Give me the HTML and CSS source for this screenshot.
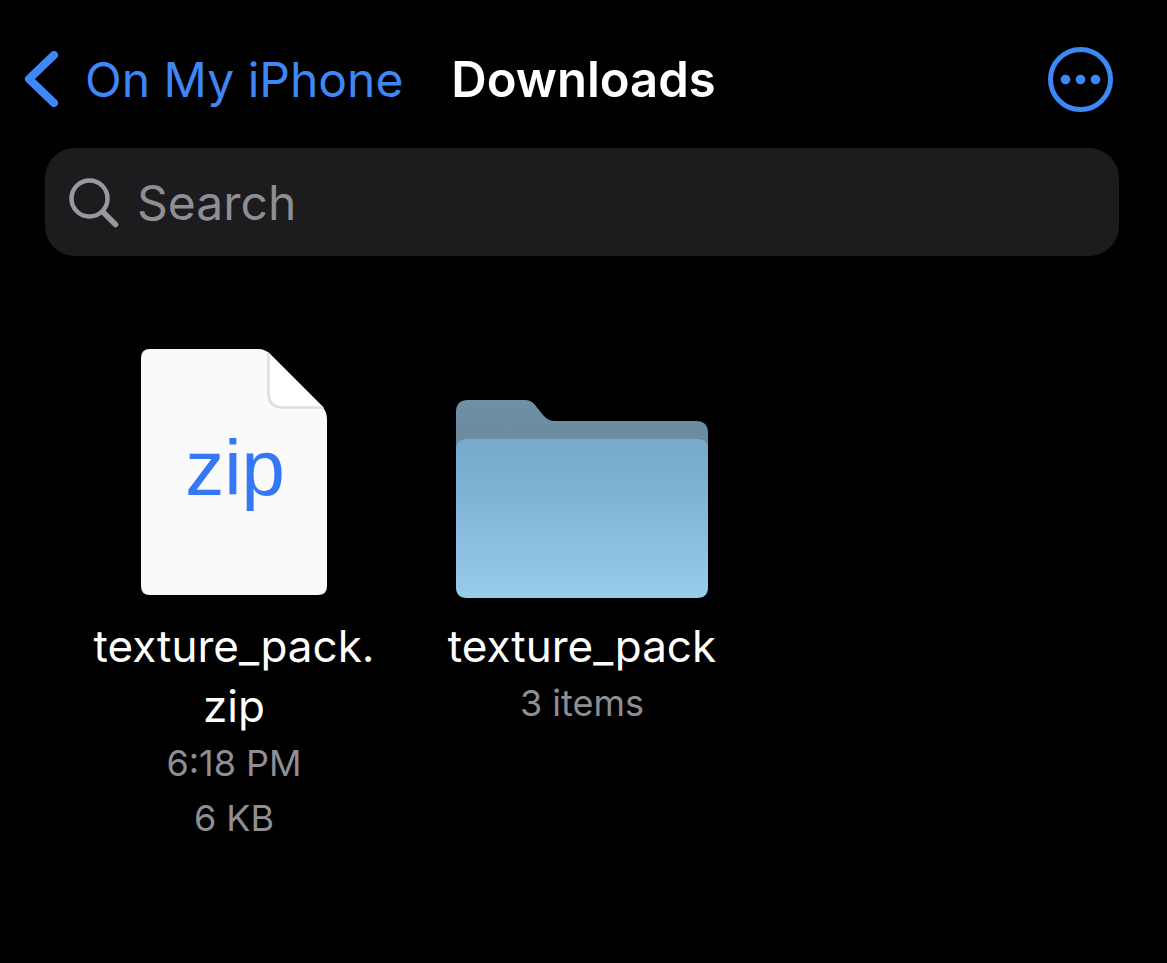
FILE: index.html
```html
<!DOCTYPE html>
<html lang="en">
<head>
  <meta charset="UTF-8" />
  <meta name="viewport" content="width=device-width, initial-scale=1.0" />
  <title>Downloads</title>
  <link rel="stylesheet" href="styles.css">
</head>
<body>

<header class="navbar">
  <a class="back" href="#">
    <svg class="back-icon" viewBox="0 0 36 58" aria-hidden="true">
      <path d="M30 4 L5 28 L30 52" />
    </svg>
    On My iPhone
  </a>
  <h1 class="title">Downloads</h1>
  <button class="more" type="button" aria-label="More options">
    <svg class="more-icon" viewBox="0 0 66 66" aria-hidden="true">
      <circle class="ring" cx="33.500" cy="32.500" r="30" />
      <circle cx="18.500" cy="32.500" r="4.8" />
      <circle cx="33.500" cy="32.500" r="4.8" />
      <circle cx="48.500" cy="32.500" r="4.8" />
    </svg>
  </button>
</header>

<label class="search">
  <svg class="search-icon" viewBox="0 0 50 50" aria-hidden="true">
    <circle cx="20.500" cy="20.500" r="18" />
    <path stroke-width="5.500" d="M34 34 L46.500 46.500" />
  </svg>
  <input class="search-input" type="text" placeholder="Search" aria-label="Search">
</label>

<main class="files">
  <!-- Zip archive -->
  <a class="item" href="#">
    <span class="thumb">
      <svg class="file-icon" viewBox="0 0 186 246" aria-hidden="true">
        <path fill="#fafafa" d="M9 0 H117 Q124 0 129 5 L180 56 Q186 62 186 70 V237 Q186 246 177 246 H9 Q0 246 0 237 V9 Q0 0 9 0 Z" />
        <path fill="#ffffff" d="M127 3 L183 59 H141 Q127 59 127 45 Z" />
        <path fill="none" stroke="#dfdfe0" stroke-width="2.6" d="M127.500 4 V44 Q127.500 58.500 142 58.500 H182" />
        <text class="file-ext" x="94" y="146">zip</text>
      </svg>
    </span>
    <span class="name">texture_pack.<wbr>zip</span>
    <span class="meta">6:18 PM</span>
    <span class="meta">6 KB</span>
  </a>

  <!-- Folder -->
  <a class="item" href="#">
    <span class="thumb">
      <svg class="folder-icon" viewBox="0 0 252 198" aria-hidden="true">
        <defs>
          <linearGradient id="folder-front" x1="0" y1="0" x2="0" y2="1">
            <stop offset="0" stop-color="#76abcb" />
            <stop offset="0.2" stop-color="#7aaecf" />
            <stop offset="1" stop-color="#99cceb" />
          </linearGradient>
          <linearGradient id="folder-back" x1="0" y1="0" x2="0" y2="1">
            <stop offset="0" stop-color="#7090a4" />
            <stop offset="1" stop-color="#68899e" />
          </linearGradient>
        </defs>
        <path fill="url(#folder-back)" d="M12 0 H69 Q75 0 79 5 L87 15 Q92 21 99 21 H240 Q252 21 252 33 V60 H0 V12 Q0 0 12 0 Z" />
        <path fill="url(#folder-front)" d="M10 39 H242 Q252 39 252 49 V187 Q252 198 241 198 H11 Q0 198 0 187 V49 Q0 39 10 39 Z" />
      </svg>
    </span>
    <span class="name">texture_pack</span>
    <span class="meta">3 items</span>
  </a>
</main>

</body>
</html>
```

FILE: styles.css
```css
* {
  box-sizing: border-box;
}

body {
  margin: 0;
  min-height: 100vh;
  background: #000000;
  color: #ffffff;
  font-family: Inter, "Liberation Sans", sans-serif;
}

.navbar {
  display: grid;
  grid-template-columns: 1fr auto 1fr;
  align-items: center;
  padding: 44px 24px 32px;
}

.back {
  display: flex;
  align-items: center;
  gap: 25px;
  color: #3f86f7;
  font-size: 48px;
  line-height: 72px;
  text-decoration: none;
  white-space: nowrap;
}

.back-icon {
  width: 36px;
  height: 58px;
  fill: none;
  stroke: #3f86f7;
  stroke-width: 8;
  stroke-linecap: round;
  stroke-linejoin: round;
}

.title {
  margin: 0;
  font-size: 49px;
  font-weight: 600;
  line-height: 72px;
}

.more {
  justify-self: end;
  display: flex;
  margin-right: 30px;
  padding: 0;
  border: none;
  background: none;
  cursor: pointer;
}

.more-icon {
  width: 66px;
  height: 66px;
  fill: #3f86f7;
}

.ring {
  fill: none;
  stroke: #3f86f7;
  stroke-width: 5;
}

.search {
  display: flex;
  align-items: center;
  gap: 18px;
  height: 108px;
  margin: 0 48px 0 45px;
  padding: 2px 24px 0;
  border-radius: 30px;
  background: #1c1c1e;
}

.search-icon {
  width: 50px;
  height: 50px;
  fill: none;
  stroke: #98989d;
  stroke-width: 4.5;
  stroke-linecap: round;
}

.search-input {
  flex: 1;
  min-width: 0;
  padding: 0;
  border: none;
  outline: none;
  background: none;
  color: #ffffff;
  font-family: inherit;
  font-size: 48px;
  line-height: 72px;
}

.search-input::placeholder {
  color: #8e8e93;
  opacity: 1;
}

.files {
  display: grid;
  grid-template-columns: repeat(3, 1fr);
  padding: 93px 63px 60px 60px;
}

.item {
  display: flex;
  flex-direction: column;
  align-items: center;
  color: #ffffff;
  text-align: center;
  text-decoration: none;
}

.thumb {
  display: flex;
  align-items: center;
  justify-content: center;
  height: 249px;
  margin-bottom: 18px;
}

.file-icon {
  width: 186px;
  height: 246px;
  align-self: flex-start;
}

.folder-icon {
  width: 252px;
  height: 198px;
  align-self: flex-end;
}

.file-ext {
  fill: #3478f6;
  font-family: "Liberation Sans", Arial, sans-serif;
  font-size: 78px;
  text-anchor: middle;
}

.name {
  max-width: 300px;
  font-size: 44px;
  line-height: 60px;
}

.meta {
  color: #8e8e93;
  font-size: 36px;
  line-height: 55px;
}
```
